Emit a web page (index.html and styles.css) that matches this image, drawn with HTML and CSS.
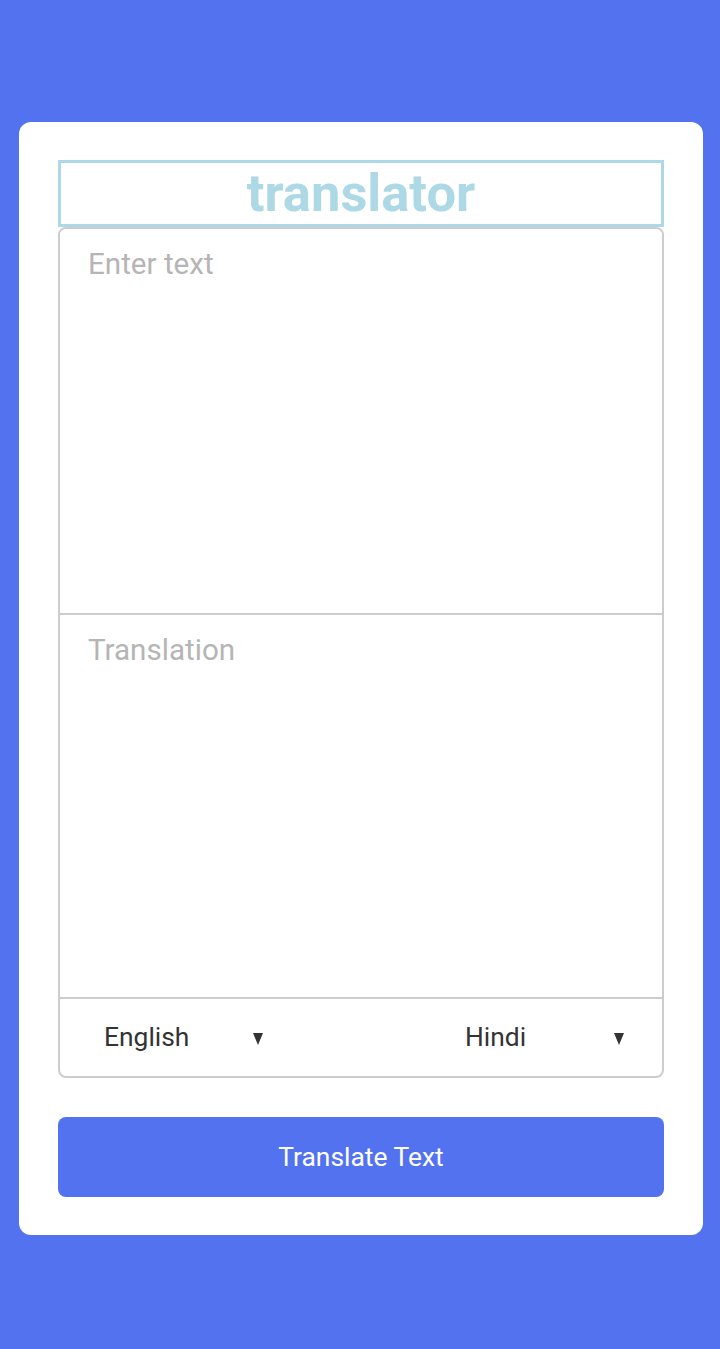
FILE: index.html
```html
<!DOCTYPE html>
<html lang="en">
<head>
<meta charset="utf-8">
<title>translator</title>
<link rel="stylesheet" href="styles.css">
</head>
<body>
<main class="card">
  <h1 class="title">translator</h1>
  <div class="panel">
    <textarea class="field field-from" placeholder="Enter text"></textarea>
    <textarea class="field field-to" placeholder="Translation" readonly></textarea>
    <div class="controls">
      <label class="lang">
        <select class="lang-select"><option>English</option></select>
        <svg class="arrow" width="10" height="12" viewBox="0 0 10 12"><polygon points="0,0 10,0 5,12" fill="#333"/></svg>
      </label>
      <label class="lang">
        <select class="lang-select"><option>Hindi</option></select>
        <svg class="arrow" width="10" height="12" viewBox="0 0 10 12"><polygon points="0,0 10,0 5,12" fill="#333"/></svg>
      </label>
    </div>
  </div>
  <button class="translate-btn">Translate Text</button>
</main>
</body>
</html>
```

FILE: styles.css
```css
* {
  box-sizing: border-box;
}

html, body {
  margin: 0;
  padding: 0;
}

body {
  background: #5372f0;
  min-height: 100vh;
  font-family: Roboto, "Liberation Sans", sans-serif;
  padding-top: 122px;
  padding-bottom: 114px;
}

.card {
  width: 684px;
  margin-left: 19px;
  background: #fff;
  border-radius: 12px;
  padding: 38px 39px;
  display: flex;
  flex-direction: column;
}

.title {
  margin: 0;
  border: 3px solid #add8e6;
  color: #add8e6;
  font-family: Roboto, "Liberation Sans", sans-serif;
  font-weight: 700;
  font-size: 52.5px;
  line-height: 61px;
  padding: 0;
  text-align: center;
}

.panel {
  border: 2px solid #ccc;
  border-radius: 8px;
  overflow: hidden;
  display: flex;
  flex-direction: column;
}

.field {
  display: block;
  width: 100%;
  border: none;
  border-bottom: 2px solid #ccc;
  outline: none;
  resize: none;
  margin: 0;
  padding: 18px 28px;
  font-family: Roboto, "Liberation Sans", sans-serif;
  font-size: 29.6px;
  line-height: normal;
  color: #333;
  background: #fff;
}

.field::placeholder {
  color: #b5b5b5;
}

.field-from {
  height: 386px;
}

.field-to {
  height: 384px;
}

.controls {
  height: 77px;
  display: flex;
  align-items: center;
  padding-left: 44px;
  padding-bottom: 1px;
  gap: 202px;
}

.lang {
  width: 159px;
  display: flex;
  align-items: center;
  justify-content: space-between;
}

.lang-select {
  appearance: none;
  -webkit-appearance: none;
  border: none;
  background: transparent;
  padding: 0;
  margin: 0;
  outline: none;
  font-family: Roboto, "Liberation Sans", sans-serif;
  font-size: 26.4px;
  color: #333;
}

.arrow {
  display: block;
  margin-top: 3px;
}

.translate-btn {
  margin-top: 39px;
  height: 80px;
  width: 100%;
  border: none;
  border-radius: 8px;
  background: #5372f0;
  color: #fff;
  font-family: Roboto, "Liberation Sans", sans-serif;
  font-size: 26.4px;
  cursor: pointer;
}
```
